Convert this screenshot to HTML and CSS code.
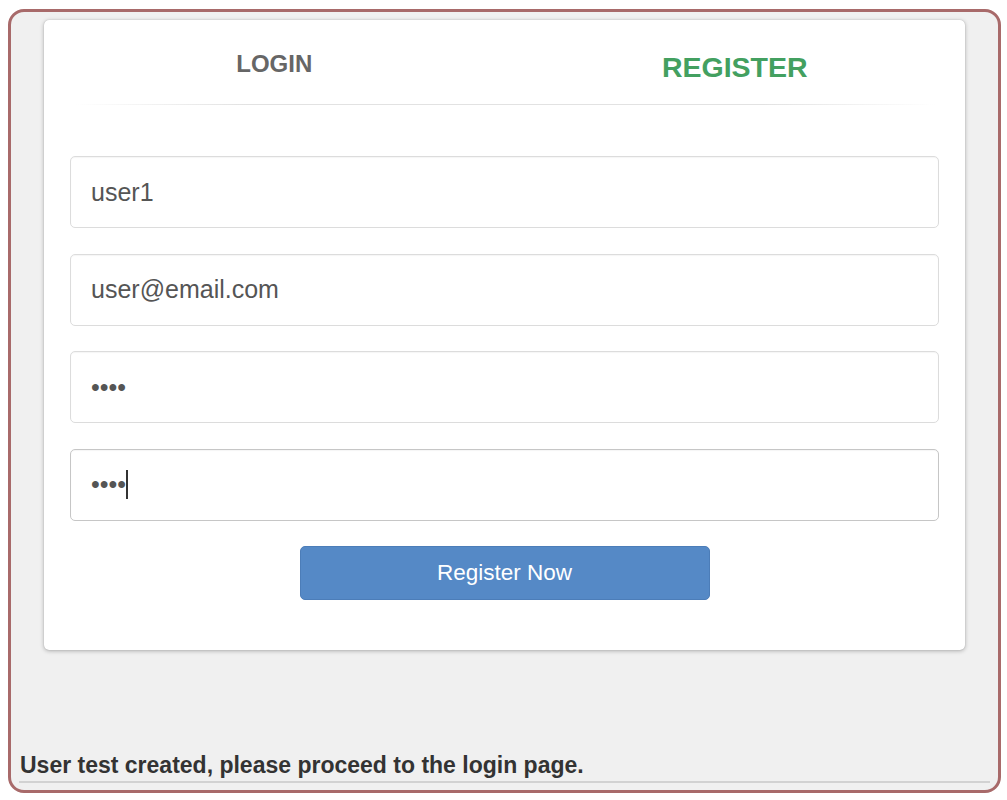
FILE: index.html
```html
<!DOCTYPE html>
<html lang="en">
<head>
<meta charset="utf-8">
<title>Register</title>
<link rel="stylesheet" href="styles.css">
</head>
<body>
<div class="frame">
  <div class="card">
    <div class="tabs">
      <div class="tab tab-login">LOGIN</div>
      <div class="tab tab-register">REGISTER</div>
    </div>
    <div class="divider"></div>
    <form class="form">
      <input class="field" type="text" value="user1">
      <input class="field" type="email" value="user@email.com">
      <input class="field" type="password" value="1234">
      <div class="field-wrap">
        <input class="field field-focus" type="password" value="1234">
        <span class="caret"></span>
      </div>
      <button class="btn" type="button">Register Now</button>
    </form>
  </div>
  <div class="status">User test created, please proceed to the login page.</div>
</div>
</body>
</html>
```

FILE: styles.css
```css
html, body {
  margin: 0;
  padding: 0;
  background: #ffffff;
}

body {
  font-family: "Liberation Sans", Arial, Helvetica, sans-serif;
}

.frame {
  box-sizing: border-box;
  width: 993px;
  height: 784px;
  margin: 9px 0 0 8px;
  border: 3px solid #a86a6a;
  border-radius: 16px;
  background: #f0f0f0;
  display: flex;
  flex-direction: column;
  padding: 8px 33px 0 33px;
}

.card {
  background: #ffffff;
  border-radius: 5px;
  box-shadow: 0 1px 4px rgba(0, 0, 0, 0.28), 0 0 1px rgba(0, 0, 0, 0.25);
}

.tabs {
  display: grid;
  grid-template-columns: 1fr 1fr;
  height: 84px;
}

.tab {
  text-align: center;
  font-weight: bold;
}

.tab-login {
  font-size: 24px;
  line-height: 24px;
  padding-top: 32px;
  color: #666666;
}

.tab-register {
  font-size: 28.5px;
  line-height: 28px;
  padding-top: 33px;
  color: #43a060;
}

.divider {
  height: 1px;
  margin: 0 30px 0 31px;
  background: linear-gradient(to right, rgba(224,224,224,0), #e2e2e2 20%, #e2e2e2 80%, rgba(224,224,224,0));
}

.form {
  display: flex;
  flex-direction: column;
  padding: 51px 26px 50px 26px;
  margin: 0;
}

.field {
  box-sizing: border-box;
  height: 72px;
  width: 100%;
  margin: 0 0 25.5px 0;
  padding: 0 20px;
  border: 1px solid #dcdcdc;
  border-radius: 5px;
  background: #ffffff;
  font-family: "Liberation Sans", Arial, Helvetica, sans-serif;
  font-size: 25px;
  color: #555555;
  box-shadow: inset 0 1px 1px rgba(0, 0, 0, 0.04);
  caret-color: #333333;
}

.field:focus {
  outline: none;
}

.field-wrap {
  position: relative;
}

.field-focus {
  border-color: #c6c6c6;
  caret-color: transparent;
}

.caret {
  position: absolute;
  left: 56px;
  top: 21px;
  width: 1.5px;
  height: 29px;
  background: #333333;
}

.btn {
  align-self: center;
  box-sizing: border-box;
  width: 410px;
  height: 54px;
  border: 1px solid #4c7db8;
  border-radius: 5px;
  background: #5589c6;
  color: #ffffff;
  font-family: "Liberation Sans", Arial, Helvetica, sans-serif;
  font-size: 22.5px;
  padding: 0;
}

.status {
  margin: auto -25px 7px -25px;
  padding: 0 0 3px 1px;
  font-size: 23px;
  line-height: 26px;
  font-weight: bold;
  color: #333333;
  border-bottom: 2px solid #d2d2d2;
}
```
